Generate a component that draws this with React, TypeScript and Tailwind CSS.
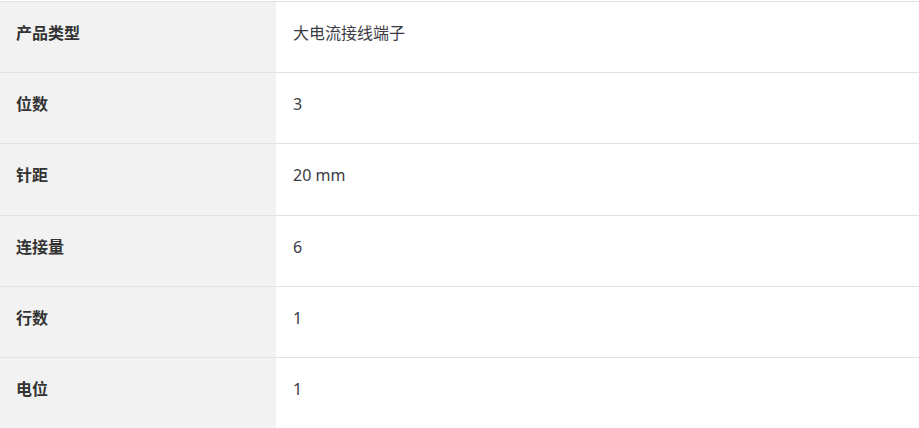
import React from 'react';

const rows = [
  { label: '产品类型', value: '大电流接线端子' },
  { label: '位数', value: '3' },
  { label: '针距', value: '20 mm' },
  { label: '连接量', value: '6' },
  { label: '行数', value: '1' },
  { label: '电位', value: '1' },
];

export default function App() {
  return (
    <div
      className="w-[919px] h-[428px] overflow-hidden bg-white pt-px"
      style={{ fontFamily: '"Noto Sans", "Noto Sans CJK SC", sans-serif' }}
    >
      <div className="border-t border-[#e2e2e2]">
        {rows.map((r) => (
          <div key={r.label} className="flex h-[71.2px] border-b border-[#e2e2e2]">
            <div className="w-[276px] shrink-0 bg-[#f2f2f2] flex items-center pl-4 pb-[8px] text-[16px] font-bold text-[#333333]">
              {r.label}
            </div>
            <div className="flex-1 flex items-center pl-[17px] pb-[8px] text-[16px] text-[#3b3b45]">
              {r.value}
            </div>
          </div>
        ))}
      </div>
    </div>
  );
}
